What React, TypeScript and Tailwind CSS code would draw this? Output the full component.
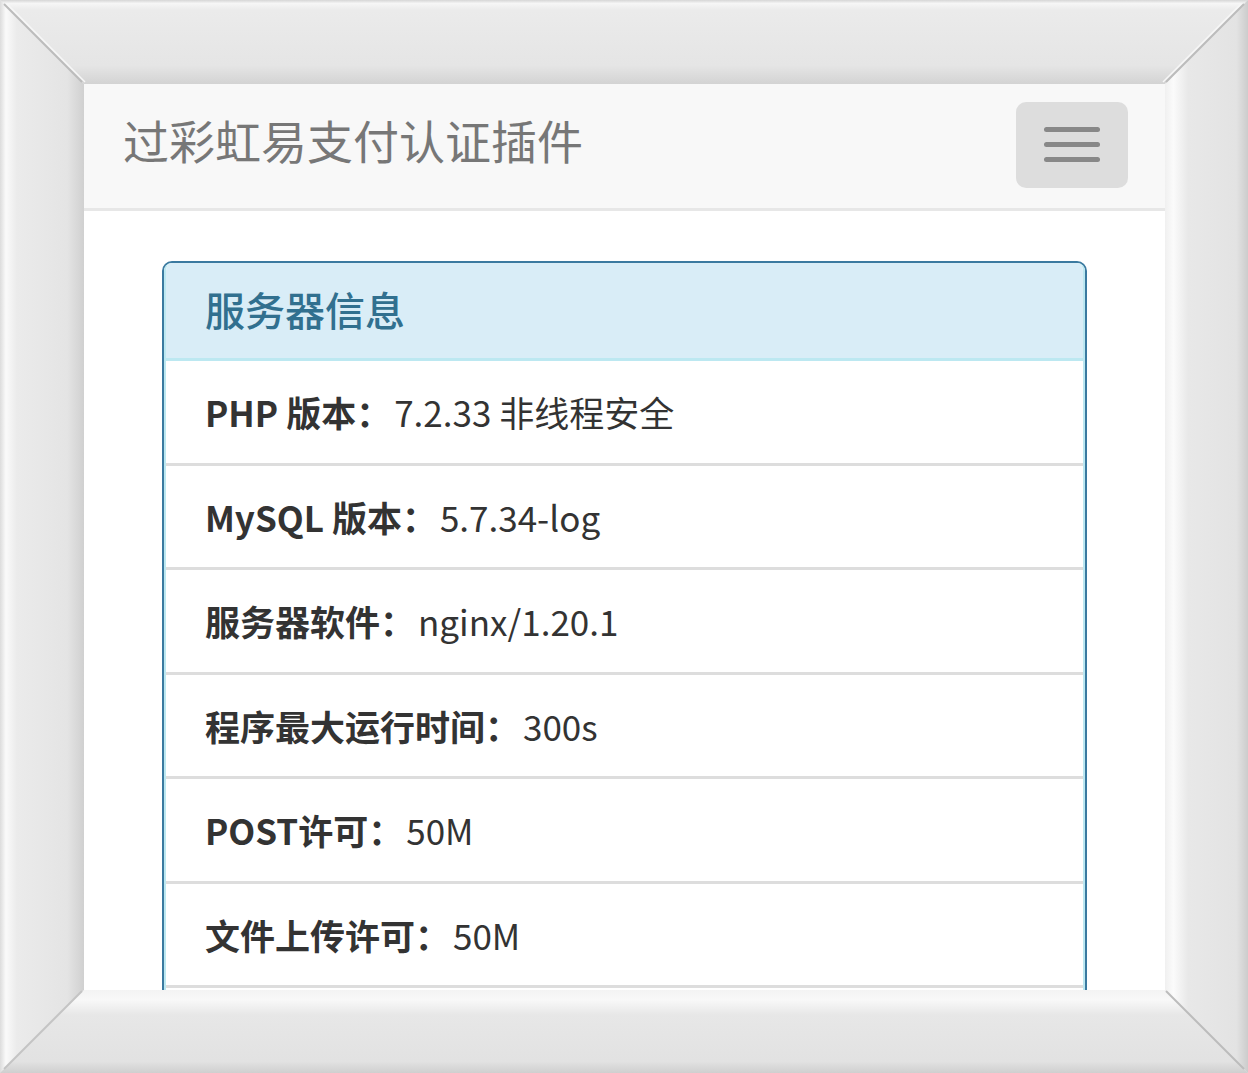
import React from 'react';

const rows = [
  { label: 'PHP 版本：', value: '7.2.33 非线程安全' },
  { label: 'MySQL 版本：', value: '5.7.34-log' },
  { label: '服务器软件：', value: 'nginx/1.20.1' },
  { label: '程序最大运行时间：', value: '300s' },
  { label: 'POST许可：', value: '50M' },
  { label: '文件上传许可：', value: '50M' },
];

const Frame = () => (
  <svg className="absolute inset-0" width="1248" height="1073" viewBox="0 0 1248 1073">
    <defs>
      <linearGradient id="gTop" x1="0" y1="0" x2="0" y2="1">
        <stop offset="0" stopColor="#d6d6d6" />
        <stop offset="0.04" stopColor="#f6f6f6" />
        <stop offset="0.12" stopColor="#ebebeb" />
        <stop offset="0.78" stopColor="#e5e5e5" />
        <stop offset="1" stopColor="#d3d3d3" />
      </linearGradient>
      <linearGradient id="gLeft" x1="0" y1="0" x2="1" y2="0">
        <stop offset="0" stopColor="#dcdcdc" />
        <stop offset="0.07" stopColor="#fafafa" />
        <stop offset="0.2" stopColor="#ebebeb" />
        <stop offset="0.8" stopColor="#e4e4e4" />
        <stop offset="1" stopColor="#d0d0d0" />
      </linearGradient>
      <linearGradient id="gRight" x1="0" y1="0" x2="1" y2="0">
        <stop offset="0" stopColor="#f0f0f0" />
        <stop offset="0.1" stopColor="#fbfbfb" />
        <stop offset="0.28" stopColor="#e8e8e8" />
        <stop offset="0.86" stopColor="#e3e3e3" />
        <stop offset="1" stopColor="#cccccc" />
      </linearGradient>
      <linearGradient id="gBottom" x1="0" y1="0" x2="0" y2="1">
        <stop offset="0" stopColor="#f3f3f3" />
        <stop offset="0.12" stopColor="#f8f8f8" />
        <stop offset="0.3" stopColor="#e7e7e7" />
        <stop offset="0.86" stopColor="#e2e2e2" />
        <stop offset="1" stopColor="#cfcfcf" />
      </linearGradient>
    </defs>
    <polygon points="0,0 1248,0 1165,84 84,84" fill="url(#gTop)" />
    <polygon points="0,0 84,84 84,990 0,1073" fill="url(#gLeft)" />
    <polygon points="1248,0 1248,1073 1165,990 1165,84" fill="url(#gRight)" />
    <polygon points="84,990 1165,990 1248,1073 0,1073" fill="url(#gBottom)" />
    <g strokeWidth="2">
      <line x1="4" y1="4" x2="82" y2="82" stroke="#bcbcbc" />
      <line x1="1244" y1="4" x2="1166" y2="82" stroke="#bcbcbc" />
      <line x1="4" y1="1069" x2="82" y2="991" stroke="#c4c4c4" />
      <line x1="1244" y1="1069" x2="1166" y2="991" stroke="#bcbcbc" />
    </g>
    <g strokeWidth="1.5" stroke="#f7f7f7">
      <line x1="7" y1="4" x2="85" y2="82" />
      <line x1="1241" y1="4" x2="1163" y2="82" />
    </g>
  </svg>
);

export default function App() {
  return (
    <div
      className="relative w-[1248px] h-[1073px] bg-[#e6e6e6] overflow-hidden"
      style={{ fontFamily: '"Noto Sans CJK SC", "Noto Sans", sans-serif' }}
    >
      <Frame />
      <div className="absolute left-[84px] top-[84px] w-[1081px] h-[906px] bg-white overflow-hidden">
        {/* navbar */}
        <div className="flex items-center justify-between h-[127px] pl-[39px] pr-[37px] bg-[#f8f8f8] border-b-[3px] border-[#e7e7e7]">
          <span className="text-[46px] leading-none text-[#777] -mt-[14px]">过彩虹易支付认证插件</span>
          <button className="flex flex-col gap-[10px] justify-center items-center w-[112px] h-[86px] rounded-[10px] bg-[#dddddd] -mt-[3px]">
            <span className="block w-[56px] h-[5px] rounded-full bg-[#888]" />
            <span className="block w-[56px] h-[5px] rounded-full bg-[#888]" />
            <span className="block w-[56px] h-[5px] rounded-full bg-[#888]" />
          </button>
        </div>

        {/* panel */}
        <div className="mx-[78px] mt-[50px] border-2 border-[#3b7aa0] rounded-[10px]">
          <div className="border-x-2 border-[#bce8f1] rounded-[8px] overflow-hidden">
            <div className="flex items-center h-[98px] pl-[39px] bg-[#d9edf7] border-b-[3px] border-[#bce8f1]">
              <h3 className="text-[40px] leading-none font-medium text-[#31708f] -mt-[3px]">服务器信息</h3>
            </div>
            {rows.map((row, i) => (
              <div
                key={i}
                className="flex items-center h-[104.5px] pl-[39px] border-b-[3px] border-[#dddddd] text-[35px] leading-none text-[#333]"
              >
                <span className="font-bold">{row.label}</span>
                <span className="ml-[3px]">{row.value}</span>
              </div>
            ))}
            <div className="h-[60px]" />
          </div>
        </div>
      </div>
    </div>
  );
}
